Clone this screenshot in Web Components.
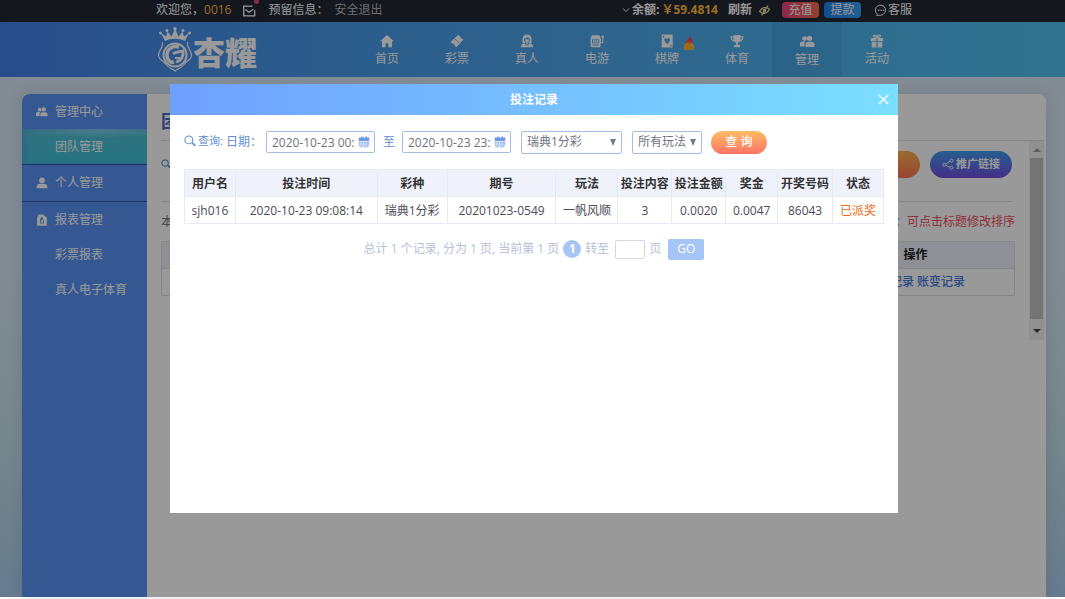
<!DOCTYPE html>
<html lang="zh-CN">
<head>
<meta charset="utf-8">
<title>投注记录</title>
<style>
html, body { height: 100%; }
body { margin: 0; background: #fff; font: 12px/18px "Open Sans", "Noto Sans CJK SC", sans-serif; color: #333; overflow: hidden; }
</style>
</head>
<body>
<app-shell>
  <top-bar slot="top"></top-bar>
  <main-nav slot="top"></main-nav>
  <side-menu slot="side"></side-menu>
  <team-panel slot="main"></team-panel>
</app-shell>
<bet-dialog heading="投注记录"></bet-dialog>
<script>
const RESET = `:host,*{box-sizing:border-box} a{color:inherit;text-decoration:none} button,input,select{font:inherit;margin:0;padding:0} button{border:0;cursor:pointer;white-space:nowrap}`;
function define(name, html, ready) {
  customElements.define(name, class extends HTMLElement {
    connectedCallback() {
      if (this.shadowRoot) return;
      const t = document.createElement('template');
      t.innerHTML = html;
      this.attachShadow({ mode: 'open' }).append(t.content.cloneNode(true));
      const s = document.createElement('style');
      s.textContent = RESET;
      this.shadowRoot.prepend(s);
      if (ready) ready(this);
    }
  });
}

const ICONS = {
  home: ['0 0 16 16', '<path d="M8 1 0 8.300h2.300V15h4.200v-4.500h3V15h4.200V8.300H16z"/>'],
  ticket: ['0 0 16 16', '<path d="M9.500.8 12 3c-.6 1.200.3 2.200 1.600 1.800L15.300 6.500 7.300 15 5 13c.5-1.300-.5-2.200-1.800-1.700L.8 9z"/><path d="m5.500 5.500 5 4.700" stroke="#4da0ea" stroke-width="1.100" stroke-dasharray="1.600 1" fill="none"/>'],
  dealer: ['0 0 16 16', '<path fill-rule="evenodd" d="M8 .5C4.500.5 2.800 3 2.800 6.500v4H6V9C4.800 8 4.500 6.800 4.800 5.200 7 5.200 8 4.500 8.500 3.500c.6 1 1.500 1.700 2.700 1.700.3 1.600 0 2.800-1.200 3.800v1.500h3.200v-4C13.200 3 11.500.5 8 .5z"/><path d="M6 6h4v2.500L8 10 6 8.500zM1 15c0-2.500 1.500-4 4-4.200l3 2.700 3-2.700c2.500.2 4 1.700 4 4.200zM7.200 9.500h1.600V12H7.200z"/>'],
  slot: ['0 0 16 16', '<path fill-rule="evenodd" d="M2.500 1.500h8L12 3.500v2h.5v6H12V15H1v-3.500H.5v-6H1v-2zM2.300 6v4.500h8.400V6zM3 12v1h7v-1z"/><path d="M3.500 6.500h1.600V10H3.500zm2.300 0h1.500V10H5.800zm2.300 0h1.600V10H8.100zM14 4.500V9h-2v1.300h3.200V4.500z"/><circle cx="14.600" cy="3.200" r="1.500"/>'],
  card: ['0 0 16 16', '<path fill-rule="evenodd" d="M2 .5h12.500v15H2zM8.200 12l3-4c1.400-2.300-1.600-4.200-3-2.200-1.400-2-4.400-.1-3 2.200zM3.300 2v2h1.300V2zm8.500 10.300v2h1.300v-2z"/>'],
  cup: ['0 0 16 16', '<path fill-rule="evenodd" d="M4 1h8v1.500h3.500c0 4-1.500 5.500-4 6L9 10v2.500h2.500V15h-7v-2.500H7V10L4.500 8.500c-2.500-.5-4-2-4-6H4zM2 4c.2 1.600 1 2.700 2 3V4zm12 0h-2v3c1-.3 1.800-1.400 2-3z"/>'],
  users: ['0 0 18 16', '<circle cx="5.500" cy="4.500" r="2.800"/><circle cx="11.500" cy="4.200" r="3.200"/><path d="M0 14V10.500C0 9 1.500 8 3.500 8h2.800C5.500 9 5.300 10 5.300 11v3zM6.500 14.500V11c0-1.700 1.500-2.800 3.300-2.800h4c2 0 3.500 1.100 3.500 2.800v3.500z"/>'],
  user: ['0 0 16 16', '<circle cx="8" cy="4.500" r="3.700"/><path d="M1 15v-2c0-2.500 2-4 4.500-4h5c2.500 0 4.500 1.500 4.500 4v2z"/>'],
  docs: ['0 0 16 16', '<path fill-rule="evenodd" d="M3 .5h6.500L14.500 5v10.500H1.500V4L3 2.800zM9 4v3l1.500 1.500v4H5.500v-6L7.500 4z"/><path d="M6.800 8h2.400v3.500H6.800z"/>'],
  gift: ['0 0 16 16', '<path d="M1 4.500h6.300v3.500H1zm7.700 0H15v3.500H8.700zM2 8.800h5.300v6.700H2zm6.700 0H14v6.700H8.700z"/><path d="M7.800 4.500C4.500 4.500 3 1.200 5 1.200c1.600 0 2.800 1.800 3 3.300.2-1.500 1.400-3.300 3-3.300 2 0 .5 3.300-2.800 3.300z" fill="none" stroke="currentColor" stroke-width="1.400"/>'],
  hot: ['0 0 16 18', '<path fill="#ff4a45" d="M9 0c.3 3 3.500 4 3.500 8v4h-9V9C4 6 8 5 9 0z"/><path fill="#ffb532" d="M5 8.500h6c1.500 1 3.500 3 4 5l-1 4.500H2l-1-4.500c.5-2 2.500-4 4-5z"/><path fill="#ff763f" d="M6.500 8h3.800l-1.500 3.500z"/>'],
  mail: ['0 0 16 14', '<path d="M12 1.500H2v11h12.500V6M4 5.500 8 8.500 13 5" fill="none" stroke="currentColor" stroke-width="1.500"/>'],
  down: ['0 0 8 8', '<path d="m1 2.500 3 3 3-3" fill="none" stroke="currentColor"/>'],
  eye: ['0 0 16 16', '<path d="M1 9c3-6 10-6.500 14-3-2 6-9 8.500-14 3zM13 1 4 15" fill="none" stroke="currentColor" stroke-width="1.900"/><circle cx="8" cy="8" r="2.500"/>'],
  chat: ['0 0 16 16', '<path d="M3 13.500A6.800 6.800 0 1 1 8 15H2z" fill="none" stroke="currentColor" stroke-width="1.300"/><circle cx="5" cy="8.300" r="1.100"/><circle cx="8.200" cy="8.300" r="1.100"/><circle cx="11.400" cy="8.300" r="1.100"/>'],
  search: ['0 0 16 16', '<path d="M11 10.500 15 14.500" stroke="currentColor" stroke-width="2.300"/><circle cx="6.500" cy="6.500" r="5.200" fill="none" stroke="currentColor" stroke-width="1.500"/>'],
  share: ['0 0 16 16', '<g fill="none" stroke="currentColor" stroke-width="1.200"><circle cx="3" cy="9" r="2"/><circle cx="12.500" cy="3.500" r="2"/><circle cx="12.500" cy="13" r="2"/><path d="m5 8 5.700-3.500M5 9.800l5.500 2.400"/></g>'],
  calendar: ['0 0 16 16', '<path d="M2 2h2V.5h2V2h4V.5h2V2h3v5H1V2z"/><path opacity=".75" d="M1 8h2.500v2.200H1zm3.300 0H7v2.200H4.300zm3.400 0h2.600v2.200H7.700zM11 8h4v2.200h-4zM1 11h2.500v2H1zm3.300 0H7v2H4.300zm3.400 0h2.600v2H7.700zM11 11h4v2h-4zM2 13.700h5V15H2zm5.700 0h6V15h-6z"/>'],
  close: ['0 0 12 12', '<path d="m1 1 10 10M11 1 1 11" fill="none" stroke="currentColor" stroke-width="1.600"/>'],
  up: ['0 0 8 8', '<path d="M0 6h8L4 2z"/>'],
  caret: ['0 0 8 8', '<path d="M0 2h8L4 6z"/>']
};
define('ui-icon', `<style>:host{display:inline-flex;flex:none;width:var(--s,14px);height:var(--s,14px)} svg{width:100%;height:100%;fill:currentColor}</style><svg aria-hidden="true"></svg>`, el => {
  const svg = el.shadowRoot.querySelector('svg'), [box, body] = ICONS[el.getAttribute('name')];
  svg.setAttribute('viewBox', box);
  svg.innerHTML = body;
});

define('app-shell', `<style>
:host{display:flex;flex-direction:column;height:calc(100vh - 2px);background:linear-gradient(#dae9f8,#d8e8f3 45%,#c3dfea 75%,#b4d3e8 92%,#abccf2)}
.body{flex:1;display:flex;margin:17px 19px 0 22px;border-radius:8px 8px 0 0;overflow:hidden;background:#fff;box-shadow:0 0 14px #7089a244}
</style><slot name="top"></slot><div class="body"><slot name="side"></slot><slot name="main"></slot></div>`);

define('top-bar', `<style>
:host{display:flex;justify-content:space-between;align-items:center;height:22px;padding:0 153px 2px 156px;background:#222733;color:#fff;white-space:nowrap}
div{display:flex;align-items:center}
.gold{color:#ffba3d}.mail{position:relative;display:flex;margin:2px 12px 0 11px;--s:14px}
.mail::after{content:"";position:absolute;right:-3px;top:-5px;width:5px;height:5px;border-radius:50%;background:#e6457c}
.out{color:#b9b9b9;margin-left:6px}
b{margin-left:2px}.gold.sum{margin-left:2px}.re{margin:0 7px 0 10px;background:none;color:#fff;font-weight:bold}
.eye{--s:11px;color:#e6de9e;margin-right:12px}
.pill{width:37px;height:16px;line-height:16px;border-radius:4px;color:#fff;margin-right:5px;background:linear-gradient(90deg,#e8457d,#f56b55)}
.blue{background:linear-gradient(90deg,#1c80ed,#379ff5);margin-right:14px}
.svc{display:flex;align-items:center;gap:1px;--s:12px}
</style>
<div><span>欢迎您，</span><span class="gold">0016</span><a href="#" class="mail" aria-label="站内信"><ui-icon name="mail"></ui-icon></a><span>预留信息：</span><a href="#" class="out">安全退出</a></div>
<div><ui-icon name="down" style="--s:8px"></ui-icon><b>余额:</b><b class="gold sum">￥59.4814</b><button class="re">刷新</button><ui-icon class="eye" name="eye"></ui-icon><button class="pill">充值</button><button class="pill blue">提款</button><a href="#" class="svc"><ui-icon name="chat"></ui-icon>客服</a></div>`);

define('brand-logo', `<style>
:host{display:flex;align-items:center;color:#fff}
svg{width:36px;height:46px;fill:none;stroke:currentColor}
span{font-size:32px;line-height:36px;font-weight:900;margin-top:6px}
</style>
<svg viewBox="0 0 36 46" aria-hidden="true"><path fill="currentColor" stroke="none" d="M8 14 4 6l5 3.500 1.500-5 4 5L18 1.500l3.500 8 4-5 1.500 5L32 6l-4 8c-6-3-14-3-20 0z"/><g fill="currentColor" stroke="none"><circle cx="3.500" cy="6" r="1.500"/><circle cx="10" cy="3.500" r="1.500"/><circle cx="18" cy="1.800" r="1.700"/><circle cx="26" cy="3.500" r="1.500"/><circle cx="32.500" cy="6" r="1.500"/></g><circle cx="18" cy="28" r="11.500" stroke-width="2"/><path stroke-width="1.200" d="M5 15c3 4-4 8-3.500 14 1 5 5 4 8 9 3 4 5.500 3 8.500 6 3-3 5.500-2 8.500-6 3-5 7-4 8-9C35 23 28 19 31 15"/><path stroke-width="3.500" d="M22 20c-6-2-12 2-12 8s4 8 7 7"/><path stroke-width="2.800" d="M16 27c3-3 6-2 10-3 1 5-2 10-7 11"/><path stroke-width="2" d="M18 31h5"/></svg><span>杏耀</span>`);

define('main-nav', `<style>
:host{display:flex;justify-content:space-between;align-items:stretch;height:55px;padding:0 153px 0 157px;color:#fff;background:linear-gradient(90deg,#4580e8,#4796e8 25%,#4fa9ec 60%,#50b9f0 85%,#51bff1)}
nav{display:flex}
a{position:relative;width:70px;display:flex;flex-direction:column;align-items:center;padding-top:12px;gap:1px;--s:14px;line-height:20px}
a[aria-current]{background:#2c78b833}
.hot{position:absolute;left:50px;top:14px;--s:14px}
</style><brand-logo></brand-logo><nav>
<a href="#"><ui-icon name="home"></ui-icon>首页</a><a href="#"><ui-icon name="ticket"></ui-icon>彩票</a><a href="#"><ui-icon name="dealer"></ui-icon>真人</a><a href="#"><ui-icon name="slot"></ui-icon>电游</a><a href="#"><ui-icon name="card"></ui-icon>棋牌<ui-icon class="hot" name="hot"></ui-icon></a><a href="#"><ui-icon name="cup"></ui-icon>体育</a><a href="#" aria-current="page"><ui-icon name="users" style="--s:15px"></ui-icon>管理</a><a href="#"><ui-icon name="gift"></ui-icon>活动</a></nav>`);

define('side-menu', `<style>
:host{display:block;flex:none;width:125px;background:#5a93f3;color:#fff}
a{display:flex;align-items:center;gap:7px;height:35px;padding-left:14px;--s:12px}
.sub{padding-left:33px}
.on{background:radial-gradient(ellipse 60% 25% at 60% 0,#8ed8e8,transparent),linear-gradient(#52bed4,#40c2d6);box-shadow:inset 3px 0 5px #5a93f3aa;border-bottom:1px solid #2c5d9d;height:36px}
.line{border-bottom:1px solid #2f5dab;height:37px}
</style><nav><a href="#"><ui-icon name="users"></ui-icon>管理中心</a><a href="#" class="sub on">团队管理</a><a href="#" class="line"><ui-icon name="user"></ui-icon>个人管理</a><a href="#"><ui-icon name="docs"></ui-icon>报表管理</a><a href="#" class="sub">彩票报表</a><a href="#" class="sub">真人电子体育</a></nav>`);

define('team-panel', `<style>
:host{display:block;flex:1;min-width:0;background:#fff;padding:0 2px 0 14px}
h1{margin:0;height:46px;padding-top:16px;font-size:18px;line-height:22px;color:#4469c5}
.view{display:flex;height:200px;border-top:1px solid #ddd}
.in{flex:1;min-width:0;margin-right:14px}
.tools{display:flex;align-items:center;justify-content:flex-end;height:61px;padding-bottom:14px;margin-right:3px;border-bottom:1px solid #ddd;gap:10px;--s:12px}
.tools>ui-icon{margin-right:auto;color:#4b7bb5;--s:10px}
button{display:flex;align-items:center;justify-content:center;gap:2px;width:82px;height:27px;border-radius:14px;color:#fff;font-size:11px;font-weight:bold;background:linear-gradient(#3e9eea,#5a75e8 50%,#734de0)}
.o{background:linear-gradient(#ffb44e,#ff7458)}
.note{display:flex;justify-content:space-between;height:39px;align-items:center;color:#777}
.note em{font-style:normal;color:#f14d60}
table{width:100%;border-collapse:collapse;table-layout:fixed}
th,td{height:27px;padding:0;text-align:center;border:1px solid #dedee6}
th{background:#eff1fb;color:#222}
th:last-child{width:198px} th,th+th{border-left-color:transparent;border-right-color:transparent}
th:first-child{border-left-color:#dedee6}th:last-child{border-right-color:#dedee6}
td a{color:#4a78e0;font-weight:500}
.bar{width:15px;background:#f1f1f1;display:flex;flex-direction:column;align-items:center;justify-content:space-between;padding:5px 0;--s:8px;color:#999}
.bar i{width:13px;flex:1;margin:4px 0 8px;background:#c1c1c1}.bar ui-icon:last-child{color:#444}
</style><h1>团队管理</h1><div class="view"><div class="in">
<div class="tools"><ui-icon name="search"></ui-icon><button class="o">开户</button><button><ui-icon name="share"></ui-icon>推广链接</button></div>
<div class="note"><span>本</span><span>：<em>可点击标题修改排序</em></span></div>
<table><tr><th></th><th>操作</th></tr><tr><td></td><td><a href="#">投注记录</a> <a href="#">账变记录</a></td></tr></table>
</div><div class="bar"><ui-icon name="up"></ui-icon><i></i><ui-icon name="caret"></ui-icon></div></div>`);

define('date-field', `<style>
:host{display:inline-flex;align-items:center;position:relative;width:109px;height:22px}
input{width:100%;height:100%;border:1px solid #a3c0e4;border-radius:2px;background:#fff;color:#70737e;padding:0 19px 0 5px;outline:0}
ui-icon{position:absolute;right:5px;top:5px;--s:12px;color:#6f9be2}
</style><input type="text"><ui-icon name="calendar"></ui-icon>`, el => {
  const i = el.shadowRoot.querySelector('input');
  i.value = el.getAttribute('value');
  i.setAttribute('aria-label', el.getAttribute('label'));
});

define('bet-dialog', `<style>
:host{position:fixed;inset:0 0 2px;display:flex;padding:84px 167px 84px 170px;background:rgba(0,0,0,.4)}
section{flex:1;min-width:0;background:#fff}
header{display:grid;grid-template-columns:30px 1fr 30px;align-items:center;height:31px;color:#fff;background:linear-gradient(90deg,#709fff,#7adfff)}
h2{grid-column:2;margin:0;text-align:center;font-size:12px;line-height:18px}
header button{display:flex;justify-content:center;background:none;color:#fff;--s:11px}
form{display:flex;align-items:center;height:54px;padding:0 14px;color:#5f8fd2;white-space:nowrap}
form small{font-size:11px;margin:0 3px 2px 2px}form>ui-icon{--s:12px;margin-bottom:2px}
date-field{margin:0 8px 0 4px}date-field.end{margin:0 10px 0 7px}
select{appearance:none;width:101px;height:23px;border:1px solid #a3c0e4;border-radius:2px;padding-left:5px;color:#70737e;background:#fff url('data:image/svg+xml,<svg xmlns="http://www.w3.org/2000/svg" width="6" height="7"><path d="M0 0h6L3 7z" fill="%23747c8c"/></svg>') no-repeat right 5px top 7px;margin-right:10px}
select.s{width:70px;margin-right:9px}
.go{width:56px;height:23px;border-radius:12px;color:#fff;font-weight:500;background:linear-gradient(#fcbc62,#ff7468)}
table{width:calc(100% - 28px);margin:0 14px;border-collapse:collapse;table-layout:fixed;white-space:nowrap}
th,td{height:27px;padding:2px 0 0;text-align:center;border:1px solid #e8e9f3}
th{background:#eff2fb;color:#333;border-bottom:0}td{color:#4a4b55}.win{color:#eb6d22}
.pager{display:flex;justify-content:center;align-items:center;height:22px;margin-top:14px;color:#b4c0d6;gap:4px}
.pager b{width:18px;height:18px;border-radius:50%;background:#a5c5f7;color:#fff;text-align:center}
.pager input{width:30px;height:19px;border:1px solid #d3d6dc;border-radius:2px;margin-left:2px}
.pager label{display:flex;align-items:center;gap:4px}
.pager button{width:36px;height:21px;margin-left:3px;border-radius:2px;background:#a5c5f7;color:#fff}
</style><section role="dialog" aria-modal="true"><header><h2></h2><button aria-label="关闭"><ui-icon name="close"></ui-icon></button></header>
<form onsubmit="return false"><ui-icon name="search"></ui-icon><small>查询:</small><span>日期：</span><date-field label="开始时间" value="2020-10-23 00:00:00"></date-field><span>至</span><date-field class="end" label="结束时间" value="2020-10-23 23:59:59"></date-field><select aria-label="彩种"><option>瑞典1分彩</option></select><select class="s" aria-label="玩法"><option>所有玩法</option></select><button class="go">查 询</button></form>
<table><colgroup></colgroup><thead><tr><th>用户名</th><th>投注时间</th><th>彩种</th><th>期号</th><th>玩法</th><th>投注内容</th><th>投注金额</th><th>奖金</th><th>开奖号码</th><th>状态</th></tr></thead>
<tbody><tr><td>sjh016</td><td>2020-10-23 09:08:14</td><td>瑞典1分彩</td><td>20201023-0549</td><td>一帆风顺</td><td>3</td><td>0.0020</td><td>0.0047</td><td>86043</td><td class="win">已派奖</td></tr></tbody></table>
<div class="pager"><span>总计 1 个记录, 分为 1 页, 当前第 1 页</span><b>1</b><label>转至 <input type="text" aria-label="页码"> 页</label><button>GO</button></div></section>`, el => {
  const r = el.shadowRoot, cols = [51, 142, 70, 109, 62, 54, 54, 52, 55, 51];
  r.querySelector('h2').textContent = el.getAttribute('heading');
  r.querySelector('colgroup').innerHTML = cols.map(w => `<col style="width:${w / 7}%">`).join('');
});
</script>
</body>
</html>
